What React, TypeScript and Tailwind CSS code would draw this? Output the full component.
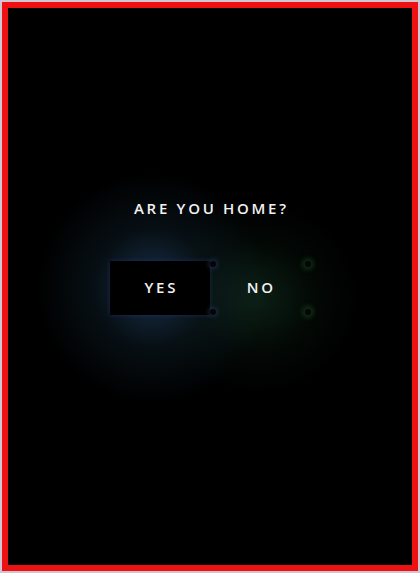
import React from "react";

type ChoiceProps = {
    label: string;
    active?: boolean;
    dotClass: string;
};

function Dot({ className }: { className: string }) {
    return <span className={`absolute h-[6px] w-[6px] rounded-full bg-[#040604] ${className}`} />;
}

function Choice({ label, active, dotClass }: ChoiceProps) {
    return (
        <div className="relative">
            <button
                className={`flex h-[54px] w-[100px] items-center justify-center text-[15px] font-semibold tracking-[0.18em] text-[#f2f2f2] ${
                    active ? "bg-black shadow-[0_0_4px_rgba(50,60,130,0.5)]" : "bg-transparent"
                }`}
            >
                <span className="pl-[0.18em]">{label}</span>
            </button>
            <Dot className={`top-[0px] ${dotClass}`} />
            <Dot className={`bottom-[0px] ${dotClass}`} />
        </div>
    );
}

export default function App() {
    return (
        <div className="h-[573px] w-[420px] bg-[#cfc6d6] px-[2px] pt-[2px]">
            <div
                className="relative h-[569px] w-[416px] overflow-hidden border-[6px] border-[#ee1111] bg-black"
                style={{ fontFamily: '"Open Sans", "Liberation Sans", sans-serif' }}
            >
                {/* soft glow behind the answers */}
                <div className="pointer-events-none absolute left-[30px] top-[165px] h-[230px] w-[230px] rounded-full bg-[radial-gradient(closest-side,rgba(35,65,105,0.75),rgba(20,45,60,0.35)_50%,transparent)]" />
                <div className="pointer-events-none absolute left-[150px] top-[195px] h-[190px] w-[200px] rounded-full bg-[radial-gradient(closest-side,rgba(22,60,40,0.5),rgba(12,35,22,0.2)_60%,transparent)]" />

                <div className="relative flex flex-col items-center pt-[189px]">
                    <h1 className="pl-[0.18em] text-[15px] font-semibold tracking-[0.18em] text-[#f2f2f2]">
                        ARE YOU HOME?
                    </h1>
                    <div className="mt-[41px] flex">
                        <Choice
                            label="YES"
                            active
                            dotClass="-right-[6px] shadow-[0_0_4px_2px_rgba(45,60,110,0.5)]"
                        />
                        <Choice
                            label="NO"
                            dotClass="-right-[1px] shadow-[0_0_5px_3px_rgba(35,90,40,0.45)]"
                        />
                    </div>
                </div>
            </div>
        </div>
    );
}
